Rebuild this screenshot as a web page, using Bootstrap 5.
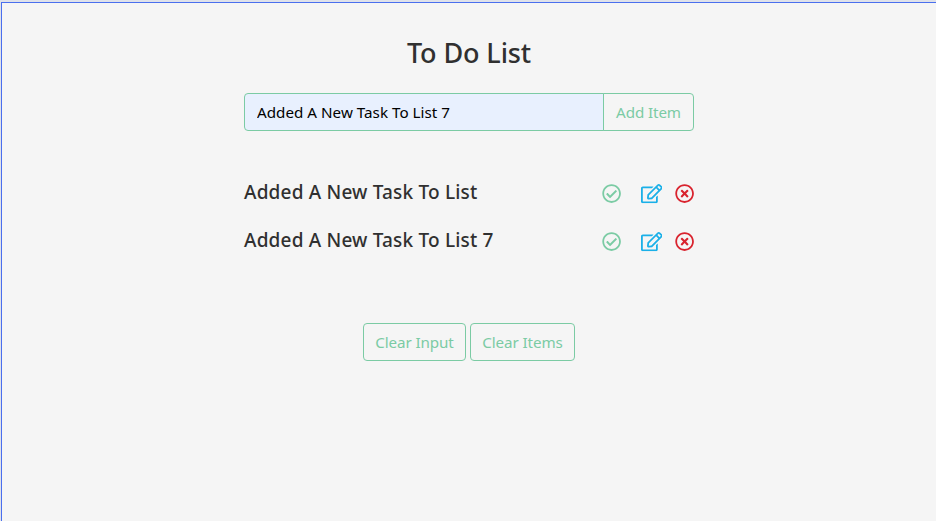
<!DOCTYPE html>
<html lang="en">
<head>
<meta charset="utf-8">
<meta name="viewport" content="width=device-width, initial-scale=1">
<title>To Do List</title>
<link href="https://cdn.jsdelivr.net/npm/bootstrap@5.3.0/dist/css/bootstrap.min.css" rel="stylesheet">
<style>
  html { height: 100%; background: #d9dce3; }
  body { height: 100%; padding: 2px 0 0 1px; background: #dfe2ea; color: #303030; font-family: "Segoe UI", "Noto Sans", sans-serif; overflow: hidden; }
  .frame { height: 100%; background: #f5f5f5; border-top: 1px solid #4a6fee; border-left: 1px solid #4a6fee; }
  .todo { width: 450px; padding-top: 33px; }
  .todo-title { font-size: 27px; line-height: 34px; letter-spacing: -.1px; margin-bottom: 23px; }
  .todo-field, .todo-field:focus { height: 38px; background: #e8f0fe; border-color: #7bcba4; border-radius: 4px; color: #000; font-size: 15.2px; letter-spacing: .02px; }
  .btn-mint { --bs-btn-color: #7bcba4; --bs-btn-border-color: #7bcba4; --bs-btn-border-radius: 4px; --bs-btn-hover-bg: #7bcba4; --bs-btn-hover-color: #fff; height: 38px; font-size: 15.2px; letter-spacing: -.1px; white-space: nowrap; }
  .add-btn { width: 91px; }
  .clear-input { width: 103px; }
  .clear-items { width: 105px; }
  .clear-row { gap: 4px; margin-top: 71px; }
  .items { margin-top: 49px; }
  .item-row { height: 24px; margin-bottom: 24px; }
  .item-name { font-size: 19px; line-height: 24px; letter-spacing: .18px; }
  .icons svg { height: 19.2px; fill: currentColor; display: block; }
  .icons { padding-top: 4.4px; }
  .done-icon { color: #7bcba4; margin-right: 20px; }
  .edit-icon { color: #1ab0e8; margin-right: 12.4px; }
  .delete-icon { color: #d9232e; }
</style>
</head>
<body>
<svg class="d-none">
  <symbol id="check" viewBox="0 0 512 512"><path d="M256 8C119.033 8 8 119.033 8 256s111.033 248 248 248 248-111.033 248-248S392.967 8 256 8zm0 48c110.532 0 200 89.451 200 200 0 110.532-89.451 200-200 200-110.532 0-200-89.451-200-200 0-110.532 89.451-200 200-200m140.204 130.267l-22.536-22.718c-4.667-4.705-12.265-4.736-16.97-.068L215.346 303.697l-59.792-60.277c-4.667-4.705-12.265-4.736-16.97-.069l-22.719 22.536c-4.705 4.667-4.736 12.265-.068 16.971l90.781 91.516c4.667 4.705 12.265 4.736 16.97.068l172.589-171.204c4.704-4.668 4.734-12.266.067-16.971z"/></symbol>
  <symbol id="edit" viewBox="0 0 576 512"><path d="M402.3 344.9l32-32c5-5 13.7-1.5 13.7 5.7V464c0 26.5-21.5 48-48 48H48c-26.5 0-48-21.5-48-48V112c0-26.5 21.5-48 48-48h273.5c7.1 0 10.7 8.6 5.7 13.7l-32 32c-1.5 1.5-3.5 2.3-5.7 2.3H48v352h352V350.5c0-2.1.8-4.1 2.3-5.6zm156.6-201.8L296.3 405.7l-90.4 10c-26.2 2.9-48.5-19.2-45.6-45.6l10-90.4L432.9 17.1c22.9-22.9 59.9-22.9 82.7 0l43.2 43.2c22.9 22.9 22.9 60 .1 82.8zM460.1 174L402 115.9 216.2 301.8l-7.3 65.3 65.3-7.3L460.1 174zm64.8-79.7l-43.2-43.2c-4.1-4.1-10.8-4.1-14.8 0L436 82l58.1 58.1 30.9-30.9c4-4.2 4-10.8-.1-14.9z"/></symbol>
  <symbol id="times" viewBox="0 0 512 512"><path d="M256 8C119 8 8 119 8 256s111 248 248 248 248-111 248-248S393 8 256 8zm0 448c-110.500 0-200-89.500-200-200S145.500 56 256 56s200 89.500 200 200-89.500 200-200 200zm101.800-262.200L295.600 256l62.200 62.200c4.700 4.700 4.700 12.300 0 17l-22.600 22.600c-4.700 4.700-12.300 4.700-17 0L256 295.600l-62.200 62.200c-4.700 4.700-12.300 4.700-17 0l-22.600-22.600c-4.700-4.700-4.700-12.300 0-17l62.200-62.200-62.200-62.200c-4.700-4.700-4.700-12.300 0-17l22.600-22.600c4.700-4.700 12.300-4.700 17 0l62.200 62.200 62.200-62.200c4.700-4.700 12.300-4.700 17 0l22.600 22.600c4.700 4.700 4.700 12.300 0 17z"/></symbol>
</svg>
<div class="frame">
  <main class="todo mx-auto">
    <h3 class="todo-title text-center">To Do List</h3>
    <form class="input-group flex-nowrap">
      <input class="form-control todo-field" type="text" value="Added A New Task To List 7" aria-label="Task">
      <button class="btn btn-mint add-btn px-0" type="button">Add Item</button>
    </form>
    <div class="items">
      <div class="item-row d-flex justify-content-between align-items-start">
        <h5 class="item-name mb-0">Added A New Task To List</h5>
        <div class="icons d-flex">
          <svg class="done-icon" viewBox="0 0 512 512"><use href="#check"/></svg>
          <svg class="edit-icon" viewBox="0 0 576 512"><use href="#edit"/></svg>
          <svg class="delete-icon" viewBox="0 0 512 512"><use href="#times"/></svg>
        </div>
      </div>
      <div class="item-row d-flex justify-content-between align-items-start">
        <h5 class="item-name mb-0">Added A New Task To List 7</h5>
        <div class="icons d-flex">
          <svg class="done-icon" viewBox="0 0 512 512"><use href="#check"/></svg>
          <svg class="edit-icon" viewBox="0 0 576 512"><use href="#edit"/></svg>
          <svg class="delete-icon" viewBox="0 0 512 512"><use href="#times"/></svg>
        </div>
      </div>
    </div>
    <div class="clear-row d-flex justify-content-center">
      <button class="btn btn-mint clear-input px-0" type="button">Clear Input</button>
      <button class="btn btn-mint clear-items px-0" type="button">Clear Items</button>
    </div>
  </main>
</div>
</body>
</html>
